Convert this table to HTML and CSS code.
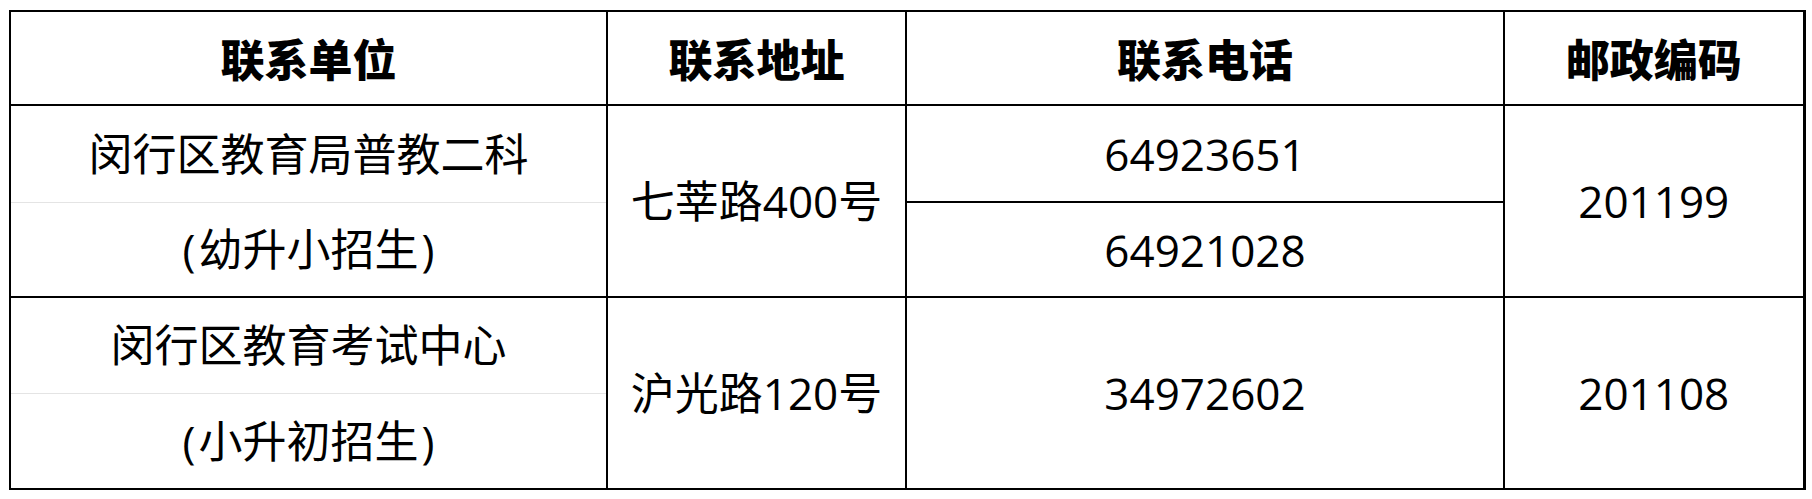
FILE: index.html
```html
<!DOCTYPE html>
<html lang="zh-CN">
<head>
<meta charset="utf-8">
<title>联系方式</title>
<link rel="stylesheet" href="styles.css">
</head>
<body>
<table class="contacts">
  <colgroup>
    <col class="c-unit">
    <col class="c-addr">
    <col class="c-phone">
    <col class="c-zip">
  </colgroup>
  <thead>
    <tr class="head-row">
      <th>联系单位</th>
      <th>联系地址</th>
      <th>联系电话</th>
      <th>邮政编码</th>
    </tr>
  </thead>
  <tbody>
    <tr class="r1a">
      <td class="unit-top">闵行区教育局普教二科</td>
      <td rowspan="2">七莘路400号</td>
      <td class="phone-split">64923651</td>
      <td rowspan="2">201199</td>
    </tr>
    <tr class="r1b">
      <td class="unit-bottom"><span class="paren">(</span>幼升小招生<span class="paren">)</span></td>
      <td>64921028</td>
    </tr>
    <tr class="r2a">
      <td class="unit-top">闵行区教育考试中心</td>
      <td rowspan="2">沪光路120号</td>
      <td rowspan="2">34972602</td>
      <td rowspan="2">201108</td>
    </tr>
    <tr class="r2b">
      <td class="unit-bottom"><span class="paren">(</span>小升初招生<span class="paren">)</span></td>
    </tr>
  </tbody>
</table>
</body>
</html>
```
FILE: styles.css
```css
html, body {
  margin: 0;
  padding: 0;
  background: #ffffff;
}

body {
  padding: 10px 0 0 9px;
  font-family: "Open Sans", "Noto Sans CJK SC", sans-serif;
  color: #000000;
}

.contacts {
  border-collapse: collapse;
  table-layout: fixed;
  width: 1794px;
  border-right: 3px solid #000;
}

.c-unit { width: 597px; }
.c-addr { width: 299px; }
.c-phone { width: 598px; }
.c-zip { width: 300px; }

.contacts th,
.contacts td {
  border: 2px solid #000;
  padding: 0;
  text-align: center;
  vertical-align: middle;
  font-size: 44px;
  line-height: 1;
  white-space: nowrap;
}

.contacts th {
  font-family: "Noto Sans CJK SC", sans-serif;
  font-weight: 900;
}

.head-row { height: 94px; }
.r1a { height: 97px; }
.r1b { height: 95px; }
.r2a { height: 96px; }
.r2b { height: 96px; }

.contacts td.unit-top {
  border-bottom: 1px solid #e4e4e4;
}

.contacts td.unit-bottom {
  border-top: 1px solid #e4e4e4;
}

.contacts td.phone-split {
  border-bottom: 2px solid #000;
}

.paren {
  display: inline-block;
  padding: 0 3px;
}
```
